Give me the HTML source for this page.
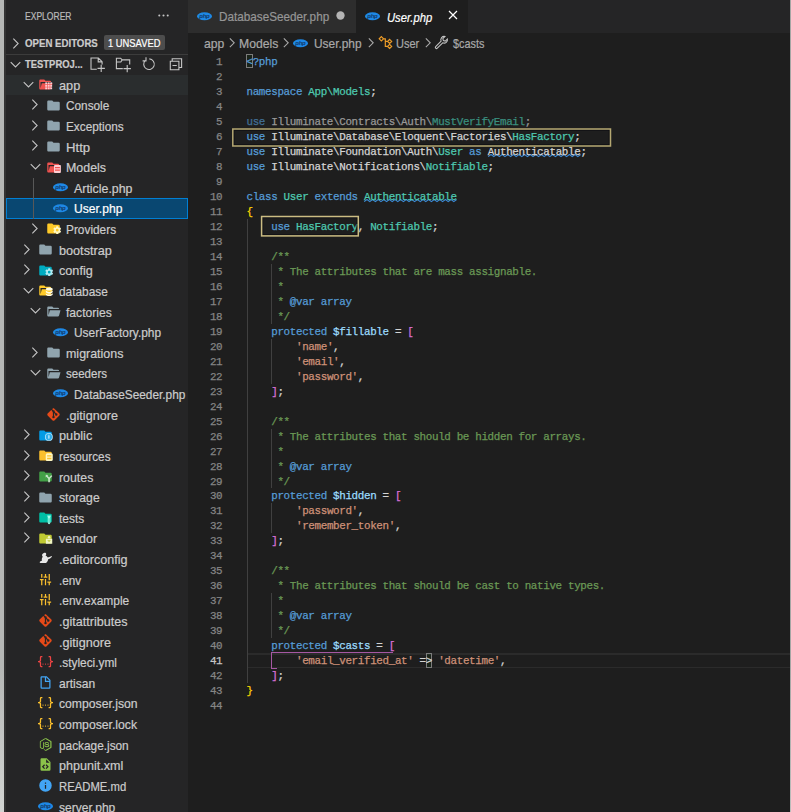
<!DOCTYPE html>
<html lang="en"><head><meta charset="utf-8"><title>User.php - testproject</title>
<style>
*{box-sizing:border-box;margin:0;padding:0}
html,body{width:791px;height:812px;overflow:hidden;background:#1e1e1e}
body{position:relative;font-family:"Liberation Sans",sans-serif;font-size:12.19px;color:#cccccc;-webkit-text-stroke:0.2px}
#strip{position:absolute;left:-6px;top:0;width:10px;height:812px;background:linear-gradient(to bottom,#b5b7b5 0,#b5b7b5 82%,#d2d4d2 100%)}
#strip2{position:absolute;left:4px;top:0;width:2px;height:812px;background:#333333}
#side{position:absolute;left:6px;top:0;width:182.400px;height:812px;background:#252526;overflow:hidden}
#side .title{position:absolute;left:19.300px;top:10.900px;font-size:10.300px;color:#bbbbbb;letter-spacing:0}
#side .dots{position:absolute;left:150px;top:8px;width:15px;height:15px}
.hdr{position:absolute;left:0;width:182.400px;height:20.625px;font-size:10.300px;font-weight:bold;color:#cccccc}
.hdr .ht{position:absolute;left:19.200px;top:0.600px;line-height:20.625px;white-space:nowrap}
.hdr svg.tw{position:absolute;left:2.300px;top:2.800px;width:15px;height:15px}
.badge{position:absolute;left:97.800px;top:1.600px;height:15.800px;width:61px;background:#4d4d4d;border-radius:2px;font-weight:normal;font-size:10.300px;line-height:15.800px;color:#ffffff;white-space:nowrap}
.badge span{position:absolute;left:4.300px;top:1.800px}
.sep{position:absolute;left:0;top:54px;width:182.400px;height:1px;background:#3c3c3c}
.act{position:absolute;top:2.800px;width:15px;height:15px}
.row{position:absolute;left:0;width:182.400px;height:20.625px;line-height:20.625px;white-space:nowrap}
.row.hov{background:#2a2d2e}
.row.sel{background:#094771;outline:1px solid #007fd4;outline-offset:-1px;color:#ffffff}
.row .twp{position:absolute;top:2.100px;width:15px;height:15px}
.row .icp{position:absolute;top:2.500px;width:15px;height:15px}
.row .lbl{position:absolute;top:1.200px}
svg.tw,svg.ic{display:block;width:15px;height:15px;overflow:visible}
.tguide{position:absolute;left:26.500px;width:1px;background:#585858}
#tabs{position:absolute;left:188.400px;top:0;width:603px;height:33px;background:#252526}
.tab{position:absolute;top:0;height:33px;font-size:12.190px;line-height:33px;white-space:nowrap}
.tab .icp{position:absolute;top:9.400px;width:15px;height:15px}
.tab .lbl{position:absolute;top:0.800px}
#bc{position:absolute;left:188.400px;top:33px;width:603px;height:21px;background:#1e1e1e;color:#a9a9a9;font-size:12.190px;line-height:21px;white-space:nowrap}
#bc span{position:absolute;top:1.100px}
#bc svg{position:absolute}
#ed{position:absolute;left:0;top:0;width:791px;height:812px;font-family:"Liberation Mono",monospace;font-size:10.900px;letter-spacing:-0.3535px;color:#d4d4d4;-webkit-text-stroke:0.25px}
.cl{position:absolute;left:0;height:15px;line-height:15px;white-space:pre}
.ln{position:absolute;left:188px;width:34.300px;text-align:right;color:#858585}
.ln.cur{color:#c6c6c6}
.ct{position:absolute;left:246.500px;top:0}
.k{color:#569cd6}.t{color:#4ec9b0}.v{color:#9cdcfe}.s{color:#ce9178}.c{color:#6a9955}.p{color:#d4d4d4}
.b1{color:#ffd700}.b2{color:#da70d6}
.kf{color:#416f96}.pf{color:#989898}.tf{color:#3a8f7f}
.sq{text-decoration:underline wavy #3f8fd8 1px;text-underline-offset:2px;text-decoration-skip-ink:none}
.ig{position:absolute;width:1px}
.box{position:absolute;border:1.500px solid #c4b57a}
.bm{position:absolute;border:1px solid #7c7c7c;background:rgba(0,100,0,.1)}
.clh{position:absolute;left:247.500px;width:542px;height:1.300px;background:#2b2b2b}
.sqg{position:absolute;overflow:visible}
#rstrip{position:absolute;left:789.700px;top:0;width:7.300px;height:812px;background:linear-gradient(to bottom,#a4a6a4 0,#a4a6a4 82%,#bcbebc 100%);z-index:5}
#wrap{position:absolute;left:-6px;top:-6px;width:803px;height:824px}
#page{position:absolute;left:6px;top:6px;width:791px;height:812px}
.bleed{position:absolute}

#fexp{display:inline-block;transform-origin:0 50%;transform:scaleX(0.8290)}
#fopen{display:inline-block;transform-origin:0 50%;transform:scaleX(0.9378)}
#funs{display:inline-block;transform-origin:0 50%;transform:scaleX(0.9096)}
#ftest{display:inline-block;transform-origin:0 50%;transform:scaleX(0.9166)}
#ftab1{display:inline-block;transform-origin:0 50%;transform:scaleX(0.9622)}
#ftab2{display:inline-block;transform-origin:0 50%;transform:scaleX(0.9224)}
#fb1{display:inline-block;transform-origin:0 50%;transform:scaleX(0.9978)}
#fb2{display:inline-block;transform-origin:0 50%;transform:scaleX(1.0001)}
#fb3{display:inline-block;transform-origin:0 50%;transform:scaleX(0.9758)}
#fb4{display:inline-block;transform-origin:0 50%;transform:scaleX(0.9015)}
#fb5{display:inline-block;transform-origin:0 50%;transform:scaleX(0.8912)}
#r0{display:inline-block;transform-origin:0 50%;transform:scaleX(1.0421)}
#r1{display:inline-block;transform-origin:0 50%;transform:scaleX(0.9683)}
#r2{display:inline-block;transform-origin:0 50%;transform:scaleX(0.9677)}
#r3{display:inline-block;transform-origin:0 50%;transform:scaleX(1.0778)}
#r4{display:inline-block;transform-origin:0 50%;transform:scaleX(1.0179)}
#r5{display:inline-block;transform-origin:0 50%;transform:scaleX(1.0157)}
#r6{display:inline-block;transform-origin:0 50%;transform:scaleX(0.9922)}
#r7{display:inline-block;transform-origin:0 50%;transform:scaleX(0.9731)}
#r8{display:inline-block;transform-origin:0 50%;transform:scaleX(1.0388)}
#r9{display:inline-block;transform-origin:0 50%;transform:scaleX(1.0390)}
#r10{display:inline-block;transform-origin:0 50%;transform:scaleX(0.9730)}
#r11{display:inline-block;transform-origin:0 50%;transform:scaleX(0.9943)}
#r12{display:inline-block;transform-origin:0 50%;transform:scaleX(0.9766)}
#r13{display:inline-block;transform-origin:0 50%;transform:scaleX(1.0210)}
#r14{display:inline-block;transform-origin:0 50%;transform:scaleX(0.9456)}
#r15{display:inline-block;transform-origin:0 50%;transform:scaleX(0.9727)}
#r16{display:inline-block;transform-origin:0 50%;transform:scaleX(1.0351)}
#r17{display:inline-block;transform-origin:0 50%;transform:scaleX(1.0457)}
#r18{display:inline-block;transform-origin:0 50%;transform:scaleX(0.9623)}
#r19{display:inline-block;transform-origin:0 50%;transform:scaleX(1.0125)}
#r20{display:inline-block;transform-origin:0 50%;transform:scaleX(1.0011)}
#r21{display:inline-block;transform-origin:0 50%;transform:scaleX(0.9786)}
#r22{display:inline-block;transform-origin:0 50%;transform:scaleX(1.0224)}
#r23{display:inline-block;transform-origin:0 50%;transform:scaleX(1.0315)}
#r24{display:inline-block;transform-origin:0 50%;transform:scaleX(0.9633)}
#r25{display:inline-block;transform-origin:0 50%;transform:scaleX(0.9805)}
#r26{display:inline-block;transform-origin:0 50%;transform:scaleX(1.0318)}
#r27{display:inline-block;transform-origin:0 50%;transform:scaleX(1.0371)}
#r28{display:inline-block;transform-origin:0 50%;transform:scaleX(0.9716)}
#r29{display:inline-block;transform-origin:0 50%;transform:scaleX(0.9865)}
#r30{display:inline-block;transform-origin:0 50%;transform:scaleX(1.0001)}
#r31{display:inline-block;transform-origin:0 50%;transform:scaleX(1.0025)}
#r32{display:inline-block;transform-origin:0 50%;transform:scaleX(0.9704)}
#r33{display:inline-block;transform-origin:0 50%;transform:scaleX(1.0300)}
#r34{display:inline-block;transform-origin:0 50%;transform:scaleX(0.9273)}
#r35{display:inline-block;transform-origin:0 50%;transform:scaleX(0.9891)}
</style></head><body>
<div id="wrap"><div id="page">
<div class="bleed" style="left:-6px;top:-6px;width:10px;height:6px;background:#b5b7b5"></div>
<div class="bleed" style="left:-6px;top:812px;width:10px;height:6px;background:#d2d4d2"></div>
<div class="bleed" style="left:4px;top:-6px;width:2px;height:824px;background:#333333"></div>
<div class="bleed" style="left:6px;top:-6px;width:182.400px;height:824px;background:#252526"></div>
<div class="bleed" style="left:188.400px;top:-6px;width:167.600px;height:6px;background:#2d2d2d"></div>
<div class="bleed" style="left:468px;top:-6px;width:329px;height:6px;background:#252526"></div>
<div class="bleed" style="left:789.700px;top:-6px;width:7.300px;height:6px;background:#a4a6a4"></div>
<div class="bleed" style="left:789.700px;top:812px;width:7.300px;height:6px;background:#bcbebc"></div>
<div id="strip"></div><div id="rstrip"></div><div id="strip2"></div>
<div id="side">
  <div class="title"><span id="fexp">EXPLORER</span></div>
  <svg class="dots" viewBox="0 0 16 16"><circle cx="3.500" cy="8" r="1.100" fill="#c5c5c5"/><circle cx="8" cy="8" r="1.100" fill="#c5c5c5"/><circle cx="12.500" cy="8" r="1.100" fill="#c5c5c5"/></svg>
  <div class="hdr" style="top:33px">
    <svg class="tw" viewBox="0 0 16 16"><path fill="none" stroke="#c5c5c5" stroke-width="1.150" d="M5.700 2.900L10.800 8l-5.100 5.100"/></svg>
    <span class="ht" id="fopen">OPEN EDITORS</span><span class="badge"><span id="funs">1 UNSAVED</span></span>
  </div>
  <div class="sep"></div>
  <div class="hdr" style="top:54.500px">
    <svg class="tw" viewBox="0 0 16 16"><path fill="none" stroke="#c5c5c5" stroke-width="1.150" d="M2.900 5.500L8 10.600l5.100-5.100"/></svg>
    <span class="ht" id="ftest">TESTPROJ...</span>
    <svg style="position:absolute;left:79px;top:-2.500px;width:105px;height:26px" viewBox="85 52 105 26" fill="none" stroke="#c5c5c5" stroke-width="1.100">
      <path d="M96.800 69.200H91V58h7.400l3.700 3.700V64.400M98.200 58v3.900H102M101.200 64.700V72.100M97.500 68.400H104.900"/>
      <path d="M122.800 68.600H116.400V58.200H120.600L122.200 59.900H129.700V64.600M116.400 62H120.800L122.200 59.900M127.200 64.900V72.300M123.500 68.600H130.900"/>
      <path d="M145.400 60.300A5.300 5.300 0 1 0 149.300 58.900M146 57.200V60.900H142.600"/>
      <path d="M170.300 61.200h8.600v8.600h-8.600zM172.200 61v-2.200h9.400v8.700h-2.400M172.500 65.500h4.300"/>
    </svg>
  </div>
<div class="row hov" style="top:74.500px"><span class="twp" style="left:14.50px"><svg class="tw" viewBox="0 0 16 16"><path fill="none" stroke="#c5c5c5" stroke-width="1.15" d="M2.900 5.500L8 10.600l5.100-5.100"/></svg></span><span class="icp" style="left:32.00px"><svg class="ic" viewBox="0 0 24 24"><path fill="#ef5350" d="M19 20H4c-1.11 0-2-.9-2-2V6c0-1.11.89-2 2-2h6l2 2h7a2 2 0 0 1 2 2H4v10l2.14-8h17.07l-2.28 8.5c-.23.87-1.01 1.5-1.93 1.5z"/><rect x="11.6" y="8.6" width="3" height="3" fill="#ffcdd2"/><rect x="11.6" y="12.6" width="3" height="3" fill="#ffcdd2"/><rect x="11.6" y="16.6" width="3" height="3" fill="#ffcdd2"/><rect x="15.6" y="8.6" width="3" height="3" fill="#ffcdd2"/><rect x="15.6" y="12.6" width="3" height="3" fill="#ffcdd2"/><rect x="15.6" y="16.6" width="3" height="3" fill="#ffcdd2"/><rect x="19.6" y="8.6" width="3" height="3" fill="#ffcdd2"/><rect x="19.6" y="12.6" width="3" height="3" fill="#ffcdd2"/><rect x="19.6" y="16.6" width="3" height="3" fill="#ffcdd2"/></svg></span><span class="lbl" id="r0" style="left:52.70px">app</span></div>
<div class="row" style="top:95.125px"><span class="twp" style="left:21.00px"><svg class="tw" viewBox="0 0 16 16"><path fill="none" stroke="#c5c5c5" stroke-width="1.15" d="M5.700 2.900L10.800 8l-5.100 5.100"/></svg></span><span class="icp" style="left:39.50px"><svg class="ic" viewBox="0 0 24 24"><path fill="#90a4ae" d="M10 4H4c-1.11 0-2 .89-2 2v12c0 1.1.9 2 2 2h16c1.1 0 2-.9 2-2V8a2 2 0 0 0-2-2h-8l-2-2z"/></svg></span><span class="lbl" id="r1" style="left:60.20px">Console</span></div>
<div class="row" style="top:115.750px"><span class="twp" style="left:21.00px"><svg class="tw" viewBox="0 0 16 16"><path fill="none" stroke="#c5c5c5" stroke-width="1.15" d="M5.700 2.900L10.800 8l-5.100 5.100"/></svg></span><span class="icp" style="left:39.50px"><svg class="ic" viewBox="0 0 24 24"><path fill="#90a4ae" d="M10 4H4c-1.11 0-2 .89-2 2v12c0 1.1.9 2 2 2h16c1.1 0 2-.9 2-2V8a2 2 0 0 0-2-2h-8l-2-2z"/></svg></span><span class="lbl" id="r2" style="left:60.20px">Exceptions</span></div>
<div class="row" style="top:136.375px"><span class="twp" style="left:21.00px"><svg class="tw" viewBox="0 0 16 16"><path fill="none" stroke="#c5c5c5" stroke-width="1.15" d="M5.700 2.900L10.800 8l-5.100 5.100"/></svg></span><span class="icp" style="left:39.50px"><svg class="ic" viewBox="0 0 24 24"><path fill="#90a4ae" d="M10 4H4c-1.11 0-2 .89-2 2v12c0 1.1.9 2 2 2h16c1.1 0 2-.9 2-2V8a2 2 0 0 0-2-2h-8l-2-2z"/></svg></span><span class="lbl" id="r3" style="left:60.20px">Http</span></div>
<div class="row" style="top:157.000px"><span class="twp" style="left:22.00px"><svg class="tw" viewBox="0 0 16 16"><path fill="none" stroke="#c5c5c5" stroke-width="1.15" d="M2.900 5.500L8 10.600l5.100-5.100"/></svg></span><span class="icp" style="left:39.50px"><svg class="ic" viewBox="0 0 24 24"><path fill="#ef5350" d="M19 20H4c-1.11 0-2-.9-2-2V6c0-1.11.89-2 2-2h6l2 2h7a2 2 0 0 1 2 2H4v10l2.14-8h17.07l-2.28 8.5c-.23.87-1.01 1.5-1.93 1.5z"/><rect x="12.8" y="7.8" width="11" height="12.8" rx="1.4" fill="#ffcdd2"/><rect x="14.4" y="11.2" width="7.8" height="2" fill="#ef5350"/><rect x="14.4" y="15.2" width="7.8" height="2" fill="#ef5350"/></svg></span><span class="lbl" id="r4" style="left:60.20px">Models</span></div>
<div class="row" style="top:177.625px"><span class="icp" style="left:47.00px"><svg class="ic" viewBox="0 0 24 24"><ellipse cx="12" cy="11.600" rx="12" ry="6.500" fill="#1e88e5"/><text x="11.800" y="14.400" font-size="9.600" font-style="italic" font-weight="bold" text-anchor="middle" fill="#113766" font-family="Liberation Sans, sans-serif" letter-spacing="-.3">php</text></svg></span><span class="lbl" id="r5" style="left:67.70px">Article.php</span></div>
<div class="row sel" style="top:198.250px"><span class="icp" style="left:47.00px"><svg class="ic" viewBox="0 0 24 24"><ellipse cx="12" cy="11.600" rx="12" ry="6.500" fill="#1e88e5"/><text x="11.800" y="14.400" font-size="9.600" font-style="italic" font-weight="bold" text-anchor="middle" fill="#113766" font-family="Liberation Sans, sans-serif" letter-spacing="-.3">php</text></svg></span><span class="lbl" id="r6" style="left:67.70px">User.php</span></div>
<div class="row" style="top:218.875px"><span class="twp" style="left:21.00px"><svg class="tw" viewBox="0 0 16 16"><path fill="none" stroke="#c5c5c5" stroke-width="1.15" d="M5.700 2.900L10.800 8l-5.100 5.100"/></svg></span><span class="icp" style="left:39.50px"><svg class="ic" viewBox="0 0 24 24"><path fill="#ffca28" d="M10 4H4c-1.11 0-2 .89-2 2v12c0 1.1.9 2 2 2h16c1.1 0 2-.9 2-2V8a2 2 0 0 0-2-2h-8l-2-2z"/><g transform="translate(10.4 7.1) scale(0.63)"><path fill="#fff9c4" d="M12 15.5A3.5 3.5 0 0 1 8.5 12 3.5 3.5 0 0 1 12 8.5a3.5 3.5 0 0 1 3.5 3.5 3.5 3.5 0 0 1-3.5 3.5m7.43-2.53c.04-.32.07-.64.07-.97 0-.33-.03-.66-.07-1l2.11-1.63c.19-.15.24-.42.12-.64l-2-3.46c-.12-.22-.39-.31-.61-.22l-2.49 1c-.52-.39-1.06-.73-1.69-.98l-.37-2.65A.506.506 0 0 0 14 2h-4c-.25 0-.46.18-.5.42l-.37 2.65c-.63.25-1.17.59-1.69.98l-2.49-1c-.22-.09-.49 0-.61.22l-2 3.46c-.13.22-.07.49.12.64L4.57 11c-.04.34-.07.67-.07 1 0 .33.03.65.07.97l-2.11 1.66c-.19.15-.25.42-.12.64l2 3.46c.12.22.39.3.61.22l2.49-1.01c.52.4 1.06.74 1.69.99l.37 2.65c.04.24.25.42.5.42h4c.25 0 .46-.18.5-.42l.37-2.65c.63-.26 1.17-.59 1.69-.99l2.49 1.01c.22.08.49 0 .61-.22l2-3.46c.12-.22.07-.49-.12-.64l-2.11-1.66z"/></g></svg></span><span class="lbl" id="r7" style="left:60.20px">Providers</span></div>
<div class="row" style="top:239.500px"><span class="twp" style="left:12.50px"><svg class="tw" viewBox="0 0 16 16"><path fill="none" stroke="#c5c5c5" stroke-width="1.15" d="M5.700 2.900L10.800 8l-5.100 5.100"/></svg></span><span class="icp" style="left:32.00px"><svg class="ic" viewBox="0 0 24 24"><path fill="#90a4ae" d="M10 4H4c-1.11 0-2 .89-2 2v12c0 1.1.9 2 2 2h16c1.1 0 2-.9 2-2V8a2 2 0 0 0-2-2h-8l-2-2z"/></svg></span><span class="lbl" id="r8" style="left:52.70px">bootstrap</span></div>
<div class="row" style="top:260.125px"><span class="twp" style="left:12.50px"><svg class="tw" viewBox="0 0 16 16"><path fill="none" stroke="#c5c5c5" stroke-width="1.15" d="M5.700 2.900L10.800 8l-5.100 5.100"/></svg></span><span class="icp" style="left:32.00px"><svg class="ic" viewBox="0 0 24 24"><path fill="#00acc1" d="M10 4H4c-1.11 0-2 .89-2 2v12c0 1.1.9 2 2 2h16c1.1 0 2-.9 2-2V8a2 2 0 0 0-2-2h-8l-2-2z"/><g transform="translate(10.4 7.1) scale(0.63)"><path fill="#b2ebf2" d="M12 15.5A3.5 3.5 0 0 1 8.5 12 3.5 3.5 0 0 1 12 8.5a3.5 3.5 0 0 1 3.5 3.5 3.5 3.5 0 0 1-3.5 3.5m7.43-2.53c.04-.32.07-.64.07-.97 0-.33-.03-.66-.07-1l2.11-1.63c.19-.15.24-.42.12-.64l-2-3.46c-.12-.22-.39-.31-.61-.22l-2.49 1c-.52-.39-1.06-.73-1.69-.98l-.37-2.65A.506.506 0 0 0 14 2h-4c-.25 0-.46.18-.5.42l-.37 2.65c-.63.25-1.17.59-1.69.98l-2.49-1c-.22-.09-.49 0-.61.22l-2 3.46c-.13.22-.07.49.12.64L4.57 11c-.04.34-.07.67-.07 1 0 .33.03.65.07.97l-2.11 1.66c-.19.15-.25.42-.12.64l2 3.46c.12.22.39.3.61.22l2.49-1.01c.52.4 1.06.74 1.69.99l.37 2.65c.04.24.25.42.5.42h4c.25 0 .46-.18.5-.42l.37-2.65c.63-.26 1.17-.59 1.69-.99l2.49 1.01c.22.08.49 0 .61-.22l2-3.46c.12-.22.07-.49-.12-.64l-2.11-1.66z"/></g></svg></span><span class="lbl" id="r9" style="left:52.70px">config</span></div>
<div class="row" style="top:280.750px"><span class="twp" style="left:14.50px"><svg class="tw" viewBox="0 0 16 16"><path fill="none" stroke="#c5c5c5" stroke-width="1.15" d="M2.900 5.500L8 10.600l5.100-5.100"/></svg></span><span class="icp" style="left:32.00px"><svg class="ic" viewBox="0 0 24 24"><path fill="#ffca28" d="M19 20H4c-1.11 0-2-.9-2-2V6c0-1.11.89-2 2-2h6l2 2h7a2 2 0 0 1 2 2H4v10l2.14-8h17.07l-2.28 8.5c-.23.87-1.01 1.5-1.93 1.5z"/><g fill="#fffde7" transform="translate(-0.2 -2.7) scale(1.06)"><ellipse cx="17.2" cy="11.6" rx="5.2" ry="2.4"/><path d="M12 13.6c0 1.3 2.3 2.4 5.2 2.4s5.2-1.1 5.2-2.4v2.6c0 1.3-2.3 2.4-5.2 2.4S12 17.500 12 16.2z"/><path d="M12 17.6c0 1.3 2.3 2.4 5.2 2.4s5.2-1.1 5.2-2.4v2.2c0 1.3-2.3 2.4-5.2 2.400S12 21.100 12 19.800z"/></g></svg></span><span class="lbl" id="r10" style="left:52.70px">database</span></div>
<div class="row" style="top:301.375px"><span class="twp" style="left:22.00px"><svg class="tw" viewBox="0 0 16 16"><path fill="none" stroke="#c5c5c5" stroke-width="1.15" d="M2.900 5.500L8 10.600l5.100-5.100"/></svg></span><span class="icp" style="left:39.50px"><svg class="ic" viewBox="0 0 24 24"><path fill="#90a4ae" d="M19 20H4c-1.11 0-2-.9-2-2V6c0-1.11.89-2 2-2h6l2 2h7a2 2 0 0 1 2 2H4v10l2.14-8h17.07l-2.28 8.5c-.23.87-1.01 1.5-1.93 1.5z"/></svg></span><span class="lbl" id="r11" style="left:60.20px">factories</span></div>
<div class="row" style="top:322.000px"><span class="icp" style="left:47.00px"><svg class="ic" viewBox="0 0 24 24"><ellipse cx="12" cy="11.600" rx="12" ry="6.500" fill="#1e88e5"/><text x="11.800" y="14.400" font-size="9.600" font-style="italic" font-weight="bold" text-anchor="middle" fill="#113766" font-family="Liberation Sans, sans-serif" letter-spacing="-.3">php</text></svg></span><span class="lbl" id="r12" style="left:67.70px">UserFactory.php</span></div>
<div class="row" style="top:342.625px"><span class="twp" style="left:21.00px"><svg class="tw" viewBox="0 0 16 16"><path fill="none" stroke="#c5c5c5" stroke-width="1.15" d="M5.700 2.900L10.800 8l-5.100 5.100"/></svg></span><span class="icp" style="left:39.50px"><svg class="ic" viewBox="0 0 24 24"><path fill="#90a4ae" d="M10 4H4c-1.11 0-2 .89-2 2v12c0 1.1.9 2 2 2h16c1.1 0 2-.9 2-2V8a2 2 0 0 0-2-2h-8l-2-2z"/></svg></span><span class="lbl" id="r13" style="left:60.20px">migrations</span></div>
<div class="row" style="top:363.250px"><span class="twp" style="left:22.00px"><svg class="tw" viewBox="0 0 16 16"><path fill="none" stroke="#c5c5c5" stroke-width="1.15" d="M2.900 5.500L8 10.600l5.100-5.100"/></svg></span><span class="icp" style="left:39.50px"><svg class="ic" viewBox="0 0 24 24"><path fill="#90a4ae" d="M19 20H4c-1.11 0-2-.9-2-2V6c0-1.11.89-2 2-2h6l2 2h7a2 2 0 0 1 2 2H4v10l2.14-8h17.07l-2.28 8.5c-.23.87-1.01 1.5-1.93 1.5z"/></svg></span><span class="lbl" id="r14" style="left:60.20px">seeders</span></div>
<div class="row" style="top:383.875px"><span class="icp" style="left:47.00px"><svg class="ic" viewBox="0 0 24 24"><ellipse cx="12" cy="11.600" rx="12" ry="6.500" fill="#1e88e5"/><text x="11.800" y="14.400" font-size="9.600" font-style="italic" font-weight="bold" text-anchor="middle" fill="#113766" font-family="Liberation Sans, sans-serif" letter-spacing="-.3">php</text></svg></span><span class="lbl" id="r15" style="left:67.70px">DatabaseSeeder.php</span></div>
<div class="row" style="top:404.500px"><span class="icp" style="left:39.50px;top:2.1px"><svg class="ic" viewBox="0 0 24 24"><path fill="#e64a19" d="M2.600 10.590L8.380 4.800l1.690 1.700c-.24.850.150 1.780.930 2.230v5.540c-.6.340-1 .990-1 1.730a2 2 0 0 0 2 2 2 2 0 0 0 2-2c0-.74-.4-1.390-1-1.730V9.410l2.070 2.090c-.7.150-.7.320-.7.500a2 2 0 0 0 2 2 2 2 0 0 0 2-2 2 2 0 0 0-2-2c-.180 0-.350 0-.5.070L13.930 7.500a1.980 1.980 0 0 0-1.150-2.340c-.43-.16-.88-.2-1.280-.09L9.800 3.380l.79-.78c.78-.79 2.040-.79 2.820 0l7.990 7.990c.79.780.79 2.040 0 2.820l-7.990 7.990c-.78.790-2.040.79-2.820 0L2.600 13.410c-.79-.78-.79-2.040 0-2.820z"/></svg></span><span class="lbl" id="r16" style="left:60.20px">.gitignore</span></div>
<div class="row" style="top:425.125px"><span class="twp" style="left:12.50px"><svg class="tw" viewBox="0 0 16 16"><path fill="none" stroke="#c5c5c5" stroke-width="1.15" d="M5.700 2.900L10.800 8l-5.100 5.100"/></svg></span><span class="icp" style="left:32.00px"><svg class="ic" viewBox="0 0 24 24"><path fill="#039be5" d="M10 4H4c-1.11 0-2 .89-2 2v12c0 1.1.9 2 2 2h16c1.1 0 2-.9 2-2V8a2 2 0 0 0-2-2h-8l-2-2z"/><circle cx="17.4" cy="14.2" r="6.3" fill="#b3e5fc"/><path d="M17.4 9.2a5 5 0 0 0 0 10 5 5 0 0 0 0-10zm0 1.300c.9 1.100 1.300 2.300 1.300 3.700s-.4 2.600-1.300 3.700c-.9-1.100-1.300-2.300-1.300-3.700s.4-2.600 1.300-3.700z" fill="#039be5" fill-rule="evenodd" opacity=".75"/></svg></span><span class="lbl" id="r17" style="left:52.70px">public</span></div>
<div class="row" style="top:445.750px"><span class="twp" style="left:12.50px"><svg class="tw" viewBox="0 0 16 16"><path fill="none" stroke="#c5c5c5" stroke-width="1.15" d="M5.700 2.900L10.800 8l-5.100 5.100"/></svg></span><span class="icp" style="left:32.00px"><svg class="ic" viewBox="0 0 24 24"><path fill="#fbc02d" d="M10 4H4c-1.11 0-2 .89-2 2v12c0 1.1.9 2 2 2h16c1.1 0 2-.9 2-2V8a2 2 0 0 0-2-2h-8l-2-2z"/><rect x="12.400" y="8.400" width="11.200" height="12.400" rx="2.400" fill="#fff9c4"/><path d="M14.600 11.400h6.800v2.200h-6.800zm0 4.200h6.800v2.200h-6.800z" fill="#fbc02d"/></svg></span><span class="lbl" id="r18" style="left:52.70px">resources</span></div>
<div class="row" style="top:466.375px"><span class="twp" style="left:12.50px"><svg class="tw" viewBox="0 0 16 16"><path fill="none" stroke="#c5c5c5" stroke-width="1.15" d="M5.700 2.900L10.800 8l-5.100 5.100"/></svg></span><span class="icp" style="left:32.00px"><svg class="ic" viewBox="0 0 24 24"><path fill="#43a047" d="M10 4H4c-1.11 0-2 .89-2 2v12c0 1.1.9 2 2 2h16c1.1 0 2-.9 2-2V8a2 2 0 0 0-2-2h-8l-2-2z"/><path d="M12.400 9.200l4 .2-1.200 1.200 2.600 2.800 3.400-3.400 1.800 1.200-4 4.200v5.800h-2.600v-5.800l-3-3.200-1.200 1.200z" fill="#c8e6c9"/></svg></span><span class="lbl" id="r19" style="left:52.70px">routes</span></div>
<div class="row" style="top:487.000px"><span class="twp" style="left:12.50px"><svg class="tw" viewBox="0 0 16 16"><path fill="none" stroke="#c5c5c5" stroke-width="1.15" d="M5.700 2.900L10.800 8l-5.100 5.100"/></svg></span><span class="icp" style="left:32.00px"><svg class="ic" viewBox="0 0 24 24"><path fill="#90a4ae" d="M10 4H4c-1.11 0-2 .89-2 2v12c0 1.1.9 2 2 2h16c1.1 0 2-.9 2-2V8a2 2 0 0 0-2-2h-8l-2-2z"/></svg></span><span class="lbl" id="r20" style="left:52.70px">storage</span></div>
<div class="row" style="top:507.625px"><span class="twp" style="left:12.50px"><svg class="tw" viewBox="0 0 16 16"><path fill="none" stroke="#c5c5c5" stroke-width="1.15" d="M5.700 2.900L10.800 8l-5.100 5.100"/></svg></span><span class="icp" style="left:32.00px"><svg class="ic" viewBox="0 0 24 24"><path fill="#00bfa5" d="M10 4H4c-1.11 0-2 .89-2 2v12c0 1.1.9 2 2 2h16c1.1 0 2-.9 2-2V8a2 2 0 0 0-2-2h-8l-2-2z"/><path d="M14.800 8.800h5.800v1.600h-.8v9.200c0 1.800-.9 3-2.100 3s-2.100-1.200-2.100-3v-9.200h-.8z" fill="#a7ffeb"/><path d="M16.700 13h2v6.600c0 .8-.4 1.400-1 1.400s-1-.6-1-1.400z" fill="#00bfa5" opacity=".55"/></svg></span><span class="lbl" id="r21" style="left:52.70px">tests</span></div>
<div class="row" style="top:528.250px"><span class="twp" style="left:12.50px"><svg class="tw" viewBox="0 0 16 16"><path fill="none" stroke="#c5c5c5" stroke-width="1.15" d="M5.700 2.900L10.800 8l-5.100 5.100"/></svg></span><span class="icp" style="left:32.00px"><svg class="ic" viewBox="0 0 24 24"><path fill="#c0ca33" d="M10 4H4c-1.11 0-2 .89-2 2v12c0 1.1.9 2 2 2h16c1.1 0 2-.9 2-2V8a2 2 0 0 0-2-2h-8l-2-2z"/><path d="M12.600 12.400h10.200v8h-10.200z" fill="#f0f4c3"/><circle cx="17.700" cy="9.800" r="2" fill="#f0f4c3"/><path d="M14.800 14.600l2.900 2.900 2.900-2.900z" fill="#c0ca33"/></svg></span><span class="lbl" id="r22" style="left:52.70px">vendor</span></div>
<div class="row" style="top:548.875px"><span class="icp" style="left:32.00px;top:2.1px"><svg class="ic" viewBox="0 0 24 24"><path fill="#e8e8e8" d="M9.500 3.200c1.700-.9 3.600.1 3.700 1.600.1 1.100-.500 1.800-1.100 2.400 1.400.5 2.600 1.500 3.500 3.200 1.600-.3 3.400-.9 5.400-2.100.9-.500 1.600.5.900 1.100-1.600 1.700-3.500 3-5.600 3.800-.3 2.200-1.400 4.200-3.300 5.800H3.800c-1-.1-1.400-1.200-.7-1.900 1.100-1 2.100-1.300 3.200-1.400-.6-2.200-.2-4.500 1.300-6.500-.9-.9-1.300-2.100-.9-3.500.3-1.100 1.500-2 2.800-2.500z"/></svg></span><span class="lbl" id="r23" style="left:52.70px">.editorconfig</span></div>
<div class="row" style="top:569.500px"><span class="icp" style="left:32.00px;top:2.1px"><svg class="ic" viewBox="0 0 24 24"><path fill="#fbc02d" d="M3 17v2h6v-2H3M3 5v2h10V5H3m10 16v-2h8v-2h-8v-2h-2v6h2M7 9v2H3v2h4v2h2V9H7m14 4v-2H11v2h10m-6-4h2V7h4V5h-4V3h-2v6z" transform="rotate(90 12 12)"/></svg></span><span class="lbl" id="r24" style="left:52.70px">.env</span></div>
<div class="row" style="top:590.125px"><span class="icp" style="left:32.00px;top:2.1px"><svg class="ic" viewBox="0 0 24 24"><path fill="#fbc02d" d="M3 17v2h6v-2H3M3 5v2h10V5H3m10 16v-2h8v-2h-8v-2h-2v6h2M7 9v2H3v2h4v2h2V9H7m14 4v-2H11v2h10m-6-4h2V7h4V5h-4V3h-2v6z" transform="rotate(90 12 12)"/></svg></span><span class="lbl" id="r25" style="left:52.70px">.env.example</span></div>
<div class="row" style="top:610.750px"><span class="icp" style="left:32.00px;top:2.1px"><svg class="ic" viewBox="0 0 24 24"><path fill="#e64a19" d="M2.600 10.590L8.380 4.800l1.690 1.700c-.24.850.150 1.780.930 2.230v5.540c-.6.340-1 .990-1 1.730a2 2 0 0 0 2 2 2 2 0 0 0 2-2c0-.74-.4-1.390-1-1.730V9.410l2.070 2.090c-.7.150-.7.320-.7.500a2 2 0 0 0 2 2 2 2 0 0 0 2-2 2 2 0 0 0-2-2c-.180 0-.350 0-.5.070L13.930 7.500a1.980 1.980 0 0 0-1.150-2.340c-.43-.16-.88-.2-1.280-.09L9.800 3.380l.79-.78c.78-.79 2.040-.79 2.820 0l7.990 7.990c.79.780.79 2.040 0 2.820l-7.990 7.990c-.78.790-2.040.79-2.820 0L2.600 13.410c-.79-.78-.79-2.040 0-2.820z"/></svg></span><span class="lbl" id="r26" style="left:52.70px">.gitattributes</span></div>
<div class="row" style="top:631.375px"><span class="icp" style="left:32.00px;top:2.1px"><svg class="ic" viewBox="0 0 24 24"><path fill="#e64a19" d="M2.600 10.590L8.380 4.800l1.690 1.700c-.24.850.150 1.780.930 2.230v5.540c-.6.340-1 .990-1 1.730a2 2 0 0 0 2 2 2 2 0 0 0 2-2c0-.74-.4-1.390-1-1.730V9.410l2.070 2.090c-.7.150-.7.320-.7.500a2 2 0 0 0 2 2 2 2 0 0 0 2-2 2 2 0 0 0-2-2c-.180 0-.350 0-.5.070L13.930 7.500a1.980 1.980 0 0 0-1.150-2.340c-.43-.16-.88-.2-1.280-.09L9.800 3.380l.79-.78c.78-.79 2.040-.79 2.820 0l7.990 7.990c.79.780.79 2.040 0 2.820l-7.990 7.990c-.78.790-2.040.79-2.820 0L2.600 13.410c-.79-.78-.79-2.040 0-2.820z"/></svg></span><span class="lbl" id="r27" style="left:52.70px">.gitignore</span></div>
<div class="row" style="top:652.000px"><span class="icp" style="left:32.00px;top:2.1px"><svg class="ic" viewBox="0 0 24 24"><path fill="#ee4444" d="M5 3h2v2H5v5a2 2 0 0 1-2 2 2 2 0 0 1 2 2v5h2v2H5c-1.070-.27-2-.9-2-2v-4a2 2 0 0 0-2-2H0v-2h1a2 2 0 0 0 2-2V5a2 2 0 0 1 2-2m14 0a2 2 0 0 1 2 2v4a2 2 0 0 0 2 2h1v2h-1a2 2 0 0 0-2 2v4a2 2 0 0 1-2 2h-2v-2h2v-5a2 2 0 0 1 2-2 2 2 0 0 1-2-2V5h-2V3h2m-7 12a1 1 0 0 1 1 1 1 1 0 0 1-1 1 1 1 0 0 1-1-1 1 1 0 0 1 1-1m-4 0a1 1 0 0 1 1 1 1 1 0 0 1-1 1 1 1 0 0 1-1-1 1 1 0 0 1 1-1m8 0a1 1 0 0 1 1 1 1 1 0 0 1-1 1 1 1 0 0 1-1-1 1 1 0 0 1 1-1z"/></svg></span><span class="lbl" id="r28" style="left:52.70px">.styleci.yml</span></div>
<div class="row" style="top:672.625px"><span class="icp" style="left:32.00px;top:2.1px"><svg class="ic" viewBox="0 0 24 24"><path fill="#42a5f5" d="M13 9h5.500L13 3.500V9M6 2h8l6 6v12a2 2 0 0 1-2 2H6a2 2 0 0 1-2-2V4c0-1.110.890-2 2-2m5 2H6v16h12v-9h-7V4z"/></svg></span><span class="lbl" id="r29" style="left:52.70px">artisan</span></div>
<div class="row" style="top:693.250px"><span class="icp" style="left:32.00px;top:2.1px"><svg class="ic" viewBox="0 0 24 24"><path fill="#fbc02d" d="M5 3h2v2H5v5a2 2 0 0 1-2 2 2 2 0 0 1 2 2v5h2v2H5c-1.070-.27-2-.9-2-2v-4a2 2 0 0 0-2-2H0v-2h1a2 2 0 0 0 2-2V5a2 2 0 0 1 2-2m14 0a2 2 0 0 1 2 2v4a2 2 0 0 0 2 2h1v2h-1a2 2 0 0 0-2 2v4a2 2 0 0 1-2 2h-2v-2h2v-5a2 2 0 0 1 2-2 2 2 0 0 1-2-2V5h-2V3h2m-7 12a1 1 0 0 1 1 1 1 1 0 0 1-1 1 1 1 0 0 1-1-1 1 1 0 0 1 1-1m-4 0a1 1 0 0 1 1 1 1 1 0 0 1-1 1 1 1 0 0 1-1-1 1 1 0 0 1 1-1m8 0a1 1 0 0 1 1 1 1 1 0 0 1-1 1 1 1 0 0 1-1-1 1 1 0 0 1 1-1z"/></svg></span><span class="lbl" id="r30" style="left:52.70px">composer.json</span></div>
<div class="row" style="top:713.875px"><span class="icp" style="left:32.00px;top:2.1px"><svg class="ic" viewBox="0 0 24 24"><path fill="#fbc02d" d="M5 3h2v2H5v5a2 2 0 0 1-2 2 2 2 0 0 1 2 2v5h2v2H5c-1.070-.27-2-.9-2-2v-4a2 2 0 0 0-2-2H0v-2h1a2 2 0 0 0 2-2V5a2 2 0 0 1 2-2m14 0a2 2 0 0 1 2 2v4a2 2 0 0 0 2 2h1v2h-1a2 2 0 0 0-2 2v4a2 2 0 0 1-2 2h-2v-2h2v-5a2 2 0 0 1 2-2 2 2 0 0 1-2-2V5h-2V3h2m-7 12a1 1 0 0 1 1 1 1 1 0 0 1-1 1 1 1 0 0 1-1-1 1 1 0 0 1 1-1m-4 0a1 1 0 0 1 1 1 1 1 0 0 1-1 1 1 1 0 0 1-1-1 1 1 0 0 1 1-1m8 0a1 1 0 0 1 1 1 1 1 0 0 1-1 1 1 1 0 0 1-1-1 1 1 0 0 1 1-1z"/></svg></span><span class="lbl" id="r31" style="left:52.70px">composer.lock</span></div>
<div class="row" style="top:734.500px"><span class="icp" style="left:32.00px;top:2.1px"><svg class="ic" viewBox="0 0 24 24"><path fill="#8bc34a" d="M12 1.850c-.270 0-.550.070-.780.200l-7.440 4.300c-.480.280-.780.800-.780 1.360v8.580c0 .560.300 1.080.780 1.360l1.950 1.120c.950.460 1.270.470 1.710.470 1.400 0 2.210-.850 2.210-2.330V8.440c0-.120-.1-.220-.220-.220H8.500c-.130 0-.230.100-.230.220v8.470c0 .660-.680 1.310-1.770.760L4.450 16.500a.260.260 0 0 1-.110-.210V7.710c0-.9.040-.170.110-.210l7.440-4.290c.060-.4.160-.4.220 0l7.440 4.290c.070.040.110.120.110.210v8.580c0 .080-.4.160-.110.210l-7.440 4.290c-.6.040-.16.040-.230 0L10 19.650c-.08-.03-.160-.04-.210-.01-.530.300-.630.360-1.120.510-.120.040-.310.110.7.320l2.480 1.470c.240.140.5.210.780.210s.540-.7.780-.210l7.440-4.290c.480-.280.780-.8.780-1.360V7.710c0-.560-.3-1.080-.780-1.360l-7.440-4.300c-.230-.130-.5-.2-.780-.2M14 8c-2.120 0-3.390.890-3.390 2.390 0 1.610 1.260 2.080 3.300 2.280 2.430.240 2.620.6 2.620 1.080 0 .830-.670 1.180-2.230 1.180-1.980 0-2.400-.490-2.550-1.470a.226.226 0 0 0-.220-.180h-.960c-.120 0-.210.090-.210.220 0 1.240.680 2.740 3.940 2.740 2.350 0 3.700-.930 3.700-2.550 0-1.610-1.080-2.030-3.370-2.340-2.310-.300-2.540-.460-2.540-1 0-.450.200-1.050 1.910-1.050 1.500 0 2.090.330 2.320 1.360.2.100.11.170.210.170h.970c.050 0 .110-.2.150-.07.040-.4.070-.1.050-.160C17.560 8.820 16.380 8 14 8z"/></svg></span><span class="lbl" id="r32" style="left:52.70px">package.json</span></div>
<div class="row" style="top:755.125px"><span class="icp" style="left:32.00px;top:2.1px"><svg class="ic" viewBox="0 0 24 24"><path fill="#8bc34a" d="M13 9h5.500L13 3.500V9M6 2h8l6 6v12a2 2 0 0 1-2 2H6a2 2 0 0 1-2-2V4c0-1.110.890-2 2-2m.120 13.500l3.740 3.740 1.420-1.410-2.330-2.330 2.330-2.330-1.420-1.410-3.740 3.740m11.160 0l-3.740-3.740-1.420 1.410 2.330 2.330-2.330 2.330 1.420 1.410 3.740-3.740z"/></svg></span><span class="lbl" id="r33" style="left:52.70px">phpunit.xml</span></div>
<div class="row" style="top:775.750px"><span class="icp" style="left:32.00px;top:2.1px"><svg class="ic" viewBox="0 0 24 24"><path fill="#42a5f5" d="M13 9h-2V7h2m0 10h-2v-6h2m-1-9A10 10 0 0 0 2 12a10 10 0 0 0 10 10 10 10 0 0 0 10-10A10 10 0 0 0 12 2z"/></svg></span><span class="lbl" id="r34" style="left:52.70px">README.md</span></div>
<div class="row" style="top:796.375px"><span class="icp" style="left:32.00px"><svg class="ic" viewBox="0 0 24 24"><ellipse cx="12" cy="11.600" rx="12" ry="6.500" fill="#1e88e5"/><text x="11.800" y="14.400" font-size="9.600" font-style="italic" font-weight="bold" text-anchor="middle" fill="#113766" font-family="Liberation Sans, sans-serif" letter-spacing="-.3">php</text></svg></span><span class="lbl" id="r35" style="left:52.70px">server.php</span></div>
  <div class="tguide" style="top:177.600px;height:41.250px"></div>
</div>
<div id="tabs">
  <div class="tab" style="left:0;width:167.600px;background:#2d2d2d;color:#969696">
    <span class="icp" style="left:8.600px"><svg class="ic" viewBox="0 0 24 24"><ellipse cx="12" cy="11.600" rx="12" ry="6.500" fill="#1e88e5"/><text x="11.800" y="14.400" font-size="9.600" font-style="italic" font-weight="bold" text-anchor="middle" fill="#113766" font-family="Liberation Sans, sans-serif" letter-spacing="-.3">php</text></svg></span>
    <span class="lbl" id="ftab1" style="left:30.400px">DatabaseSeeder.php</span>
    <svg style="position:absolute;left:147.600px;top:11px;width:9px;height:9px" viewBox="0 0 10 10"><circle cx="5" cy="5" r="4.600" fill="#b4b4b4"/></svg>
  </div>
  <div class="tab" style="left:167.600px;width:112px;background:#1e1e1e;color:#ffffff">
    <span class="icp" style="left:9.400px"><svg class="ic" viewBox="0 0 24 24"><ellipse cx="12" cy="11.600" rx="12" ry="6.500" fill="#1e88e5"/><text x="11.800" y="14.400" font-size="9.600" font-style="italic" font-weight="bold" text-anchor="middle" fill="#113766" font-family="Liberation Sans, sans-serif" letter-spacing="-.3">php</text></svg></span>
    <span class="lbl" id="ftab2" style="left:31px;top:1.500px;font-style:italic">User.php</span>
    <svg style="position:absolute;left:92.500px;top:10.400px;width:10px;height:10px" viewBox="0 0 10 10"><path d="M1 1l8 8M9 1l-8 8" stroke="#ffffff" stroke-width="1.200" fill="none"/></svg>
  </div>
</div>
<div id="bc">
  <span id="fb1" style="left:15.200px">app</span>
  <svg style="left:36.500px;top:2.700px;width:13.600px;height:13.600px" viewBox="0 0 16 16"><path fill="none" stroke="#a9a9a9" stroke-width="1.300" d="M5.700 2.900L10.800 8l-5.100 5.100"/></svg>
  <span id="fb2" style="left:51px">Models</span>
  <svg style="left:91.100px;top:2.700px;width:13.600px;height:13.600px" viewBox="0 0 16 16"><path fill="none" stroke="#a9a9a9" stroke-width="1.300" d="M5.700 2.900L10.800 8l-5.100 5.100"/></svg>
  <svg style="left:104.900px;top:3.400px;width:15px;height:15px" viewBox="0 0 24 24"><ellipse cx="12" cy="11.600" rx="12" ry="6.500" fill="#1e88e5"/><text x="11.800" y="14.400" font-size="9.600" font-style="italic" font-weight="bold" text-anchor="middle" fill="#113766" font-family="Liberation Sans, sans-serif" letter-spacing="-.3">php</text></svg>
  <span id="fb3" style="left:125.800px">User.php</span>
  <svg style="left:176.000px;top:2.700px;width:13.600px;height:13.600px" viewBox="0 0 16 16"><path fill="none" stroke="#a9a9a9" stroke-width="1.300" d="M5.700 2.900L10.800 8l-5.100 5.100"/></svg>
  <svg style="left:189.400px;top:2.200px;width:15px;height:15px" viewBox="0 0 16 16"><path fill="none" stroke="#ee9d28" stroke-width="1.250" d="M3.600 1.800l2.300 2.300-2.300 2.300-2.300-2.300zM12.400 4.600l2.200 2.200-2.200 2.200-2.200-2.200zM12.400 10l2.200 2.200-2.200 2.200-2.200-2.200zM5.900 4.100h1.900v8.100h2.400M7.800 6.800h2.400"/></svg>
  <span id="fb4" style="left:207.400px">User</span>
  <svg style="left:232.500px;top:2.700px;width:13.600px;height:13.600px" viewBox="0 0 16 16"><path fill="none" stroke="#a9a9a9" stroke-width="1.300" d="M5.700 2.900L10.800 8l-5.100 5.100"/></svg>
  <svg style="left:245.600px;top:2.300px;width:15px;height:15px" viewBox="0 0 16 16"><path fill="none" stroke="#c5c5c5" stroke-width="1.100" d="M14.300 4.200a3.600 3.600 0 0 1-5 4.100l-5.800 5.800a1.200 1.200 0 0 1-1.700-1.700l5.800-5.800a3.600 3.600 0 0 1 4.100-5l-2.300 2.300.6 2 2 .6z"/></svg>
  <span id="fb5" style="left:265px">$casts</span>
</div>
<div id="ed">
<div class="clh" style="top:653.300px"></div><div class="clh" style="top:666.900px"></div>
<div class="bm" style="left:246.400px;top:54.200px;width:6.600px;height:14.200px"></div>
<div class="bm" style="left:425.800px;top:653.400px;width:6.400px;height:14.900px"></div>
<div class="ig" style="left:246.60px;top:218.75px;height:464.57px;background:#404040"></div>
<div class="ig" style="left:271.35px;top:263.70px;height:59.94px;background:#404040"></div>
<div class="ig" style="left:271.35px;top:338.63px;height:44.96px;background:#404040"></div>
<div class="ig" style="left:271.35px;top:428.55px;height:59.94px;background:#404040"></div>
<div class="ig" style="left:271.35px;top:503.48px;height:29.97px;background:#404040"></div>
<div class="ig" style="left:271.35px;top:593.40px;height:44.96px;background:#404040"></div>
<svg class="sqg" style="left:487.81px;top:154.30px;width:92.81px;height:3.2px" viewBox="0 0 92.81 3.2"><path d="M0.00 2.70L2.81 0.50L5.62 2.70L8.44 0.50L11.25 2.70L14.06 0.50L16.88 2.70L19.69 0.50L22.50 2.70L25.31 0.50L28.12 2.70L30.94 0.50L33.75 2.70L36.56 0.50L39.38 2.70L42.19 0.50L45.00 2.70L47.81 0.50L50.62 2.70L53.44 0.50L56.25 2.70L59.06 0.50L61.88 2.70L64.69 0.50L67.50 2.70L70.31 0.50L73.12 2.70L75.94 0.50L78.75 2.70L81.56 0.50L84.38 2.70L87.19 0.50L90.00 2.70L92.81 0.50" fill="none" stroke="#3c8ad8" stroke-width="1.05" stroke-linejoin="round"/></svg>
<svg class="sqg" style="left:364.06px;top:199.26px;width:92.81px;height:3.2px" viewBox="0 0 92.81 3.2"><path d="M0.00 2.70L2.81 0.50L5.62 2.70L8.44 0.50L11.25 2.70L14.06 0.50L16.88 2.70L19.69 0.50L22.50 2.70L25.31 0.50L28.12 2.70L30.94 0.50L33.75 2.70L36.56 0.50L39.38 2.70L42.19 0.50L45.00 2.70L47.81 0.50L50.62 2.70L53.44 0.50L56.25 2.70L59.06 0.50L61.88 2.70L64.69 0.50L67.50 2.70L70.31 0.50L73.12 2.70L75.94 0.50L78.75 2.70L81.56 0.50L84.38 2.70L87.19 0.50L90.00 2.70L92.81 0.50" fill="none" stroke="#3c8ad8" stroke-width="1.05" stroke-linejoin="round"/></svg>
<div class="cl" style="top:54.90px"><span class="ln">1</span><span class="ct"><span class="k">&lt;?php</span></span></div>
<div class="cl" style="top:69.89px"><span class="ln">2</span><span class="ct"></span></div>
<div class="cl" style="top:84.87px"><span class="ln">3</span><span class="ct"><span class="k">namespace</span><span class="p"> </span><span class="t">App\Models</span><span class="p">;</span></span></div>
<div class="cl" style="top:99.86px"><span class="ln">4</span><span class="ct"></span></div>
<div class="cl" style="top:114.84px"><span class="ln">5</span><span class="ct"><span class="kf">use</span><span class="pf"> Illuminate\Contracts\Auth\</span><span class="tf">MustVerifyEmail</span><span class="pf">;</span></span></div>
<div class="cl" style="top:129.83px"><span class="ln">6</span><span class="ct"><span class="k">use</span><span class="p"> Illuminate\Database\Eloquent\Factories\</span><span class="t">HasFactory</span><span class="p">;</span></span></div>
<div class="cl" style="top:144.82px"><span class="ln">7</span><span class="ct"><span class="k">use</span><span class="p"> Illuminate\Foundation\Auth\</span><span class="t">User</span><span class="p"> </span><span class="k">as</span><span class="p"> </span><span class="p">Authenticatable</span><span class="p">;</span></span></div>
<div class="cl" style="top:159.80px"><span class="ln">8</span><span class="ct"><span class="k">use</span><span class="p"> Illuminate\Notifications\</span><span class="t">Notifiable</span><span class="p">;</span></span></div>
<div class="cl" style="top:174.79px"><span class="ln">9</span><span class="ct"></span></div>
<div class="cl" style="top:189.77px"><span class="ln">10</span><span class="ct"><span class="k">class</span><span class="p"> </span><span class="t">User</span><span class="p"> </span><span class="k">extends</span><span class="p"> </span><span class="t">Authenticatable</span></span></div>
<div class="cl" style="top:204.76px"><span class="ln">11</span><span class="ct"><span class="b1">{</span></span></div>
<div class="cl" style="top:219.75px"><span class="ln">12</span><span class="ct"><span class="p">    </span><span class="k">use</span><span class="p"> </span><span class="t">HasFactory</span><span class="p">, </span><span class="t">Notifiable</span><span class="p">;</span></span></div>
<div class="cl" style="top:234.73px"><span class="ln">13</span><span class="ct"></span></div>
<div class="cl" style="top:249.72px"><span class="ln">14</span><span class="ct"><span class="c">    /**</span></span></div>
<div class="cl" style="top:264.70px"><span class="ln">15</span><span class="ct"><span class="c">     * The attributes that are mass assignable.</span></span></div>
<div class="cl" style="top:279.69px"><span class="ln">16</span><span class="ct"><span class="c">     *</span></span></div>
<div class="cl" style="top:294.68px"><span class="ln">17</span><span class="ct"><span class="c">     * </span><span class="k">@var</span><span class="c"> </span><span class="k">array</span></span></div>
<div class="cl" style="top:309.66px"><span class="ln">18</span><span class="ct"><span class="c">     */</span></span></div>
<div class="cl" style="top:324.65px"><span class="ln">19</span><span class="ct"><span class="p">    </span><span class="k">protected</span><span class="p"> </span><span class="v">$fillable</span><span class="p"> = </span><span class="b2">[</span></span></div>
<div class="cl" style="top:339.63px"><span class="ln">20</span><span class="ct"><span class="p">        </span><span class="s">&#x27;name&#x27;</span><span class="p">,</span></span></div>
<div class="cl" style="top:354.62px"><span class="ln">21</span><span class="ct"><span class="p">        </span><span class="s">&#x27;email&#x27;</span><span class="p">,</span></span></div>
<div class="cl" style="top:369.61px"><span class="ln">22</span><span class="ct"><span class="p">        </span><span class="s">&#x27;password&#x27;</span><span class="p">,</span></span></div>
<div class="cl" style="top:384.59px"><span class="ln">23</span><span class="ct"><span class="p">    </span><span class="b2">]</span><span class="p">;</span></span></div>
<div class="cl" style="top:399.58px"><span class="ln">24</span><span class="ct"></span></div>
<div class="cl" style="top:414.56px"><span class="ln">25</span><span class="ct"><span class="c">    /**</span></span></div>
<div class="cl" style="top:429.55px"><span class="ln">26</span><span class="ct"><span class="c">     * The attributes that should be hidden for arrays.</span></span></div>
<div class="cl" style="top:444.54px"><span class="ln">27</span><span class="ct"><span class="c">     *</span></span></div>
<div class="cl" style="top:459.52px"><span class="ln">28</span><span class="ct"><span class="c">     * </span><span class="k">@var</span><span class="c"> </span><span class="k">array</span></span></div>
<div class="cl" style="top:474.51px"><span class="ln">29</span><span class="ct"><span class="c">     */</span></span></div>
<div class="cl" style="top:489.49px"><span class="ln">30</span><span class="ct"><span class="p">    </span><span class="k">protected</span><span class="p"> </span><span class="v">$hidden</span><span class="p"> = </span><span class="b2">[</span></span></div>
<div class="cl" style="top:504.48px"><span class="ln">31</span><span class="ct"><span class="p">        </span><span class="s">&#x27;password&#x27;</span><span class="p">,</span></span></div>
<div class="cl" style="top:519.47px"><span class="ln">32</span><span class="ct"><span class="p">        </span><span class="s">&#x27;remember_token&#x27;</span><span class="p">,</span></span></div>
<div class="cl" style="top:534.45px"><span class="ln">33</span><span class="ct"><span class="p">    </span><span class="b2">]</span><span class="p">;</span></span></div>
<div class="cl" style="top:549.44px"><span class="ln">34</span><span class="ct"></span></div>
<div class="cl" style="top:564.42px"><span class="ln">35</span><span class="ct"><span class="c">    /**</span></span></div>
<div class="cl" style="top:579.41px"><span class="ln">36</span><span class="ct"><span class="c">     * The attributes that should be cast to native types.</span></span></div>
<div class="cl" style="top:594.40px"><span class="ln">37</span><span class="ct"><span class="c">     *</span></span></div>
<div class="cl" style="top:609.38px"><span class="ln">38</span><span class="ct"><span class="c">     * </span><span class="k">@var</span><span class="c"> </span><span class="k">array</span></span></div>
<div class="cl" style="top:624.37px"><span class="ln">39</span><span class="ct"><span class="c">     */</span></span></div>
<div class="cl" style="top:639.35px"><span class="ln">40</span><span class="ct"><span class="p">    </span><span class="k">protected</span><span class="p"> </span><span class="v">$casts</span><span class="p"> = </span><span class="b2">[</span></span></div>
<div class="cl" style="top:654.34px"><span class="ln cur">41</span><span class="ct"><span class="p">        </span><span class="s">&#x27;email_verified_at&#x27;</span><span class="p"> =&gt;</span><span class="p"> </span><span class="s">&#x27;datetime&#x27;</span><span class="p">,</span></span></div>
<div class="cl" style="top:669.33px"><span class="ln">42</span><span class="ct"><span class="p">    </span><span class="b2">]</span><span class="p">;</span></span></div>
<div class="cl" style="top:684.31px"><span class="ln">43</span><span class="ct"><span class="b1">}</span></span></div>
<div class="cl" style="top:699.30px"><span class="ln">44</span><span class="ct"></span></div>
<div class="ig" style="left:271.200px;top:652.200px;width:122px;height:1.200px;background:#a557a3"></div>
<div class="ig" style="left:271.200px;top:652.200px;width:1.200px;height:16.500px;background:#a557a3"></div>
<div class="ig" style="left:271.200px;top:667.600px;width:6px;height:1.200px;background:#a557a3"></div>
<svg style="position:absolute;left:0;top:0;width:791px;height:812px" viewBox="0 0 791 812" fill="none">
<rect x="234.100" y="130.400" width="375" height="14.200" stroke="#121216" stroke-width="1"/>
<rect x="232.800" y="129" width="377.700" height="17" stroke="#b5a872" stroke-width="1.500"/>
<rect x="262.900" y="217.800" width="94.100" height="16.800" stroke="#121216" stroke-width="1"/>
<rect x="261.600" y="216.500" width="96.700" height="19.400" stroke="#cbbc82" stroke-width="1.500"/>
</svg>
</div>
</div></div>
</body></html>
